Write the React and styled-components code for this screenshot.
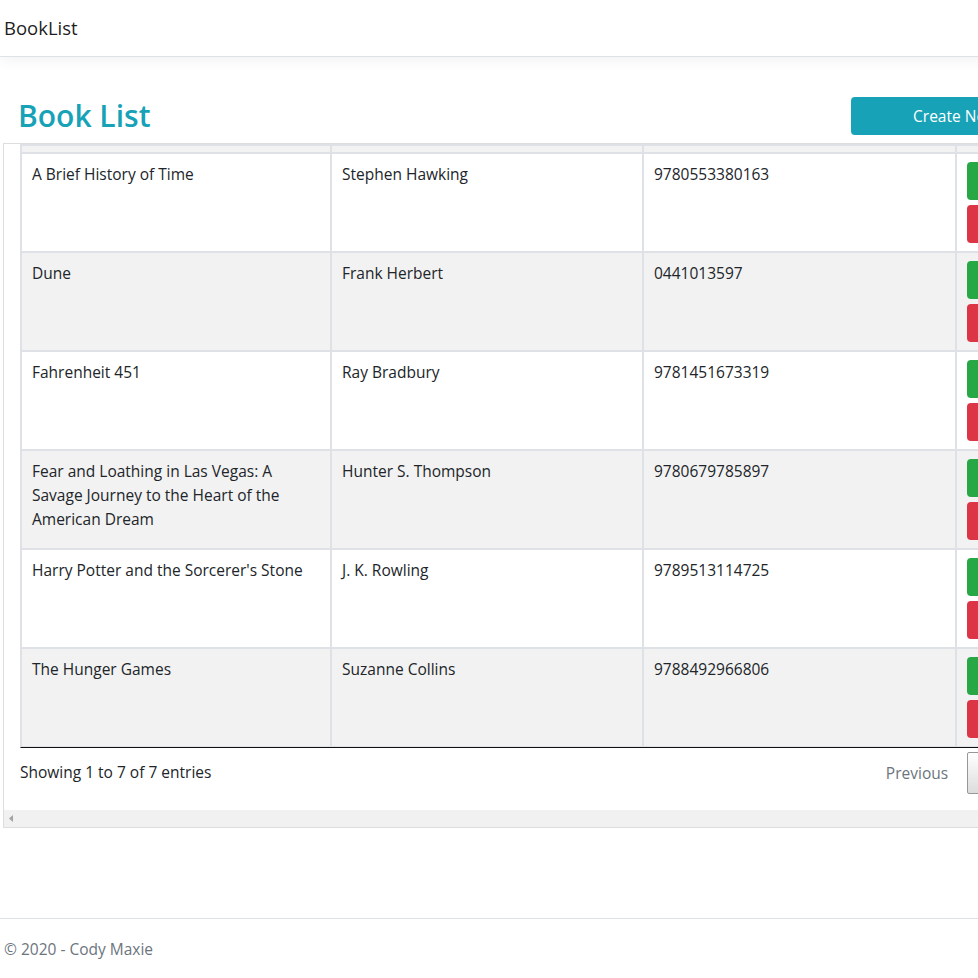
import React from 'react'
import styled, { createGlobalStyle } from 'styled-components'

const GlobalStyle = createGlobalStyle`
  * { box-sizing: border-box; }
  html, body {
    margin: 0;
    padding: 0;
    overflow: hidden;
    background: #fff;
  }
  body {
    font-family: "Open Sans", "Noto Sans", "DejaVu Sans", sans-serif;
    font-size: 15.5px;
    line-height: 24px;
    color: #212529;
  }
`

const Page = styled.div`
  display: flex;
  flex-direction: column;
  min-height: 978px;
  width: 1200px;
`

const Navbar = styled.nav`
  display: flex;
  align-items: center;
  height: 57px;
  padding: 8px 4px;
  border-bottom: 1px solid #dee2e6;
  box-shadow: 0 4px 12px rgba(0, 0, 0, 0.05);
  margin-bottom: 40px;
`

const Brand = styled.span`
  font-size: 18.5px;
  line-height: 30px;
  color: rgba(0, 0, 0, 0.9);
`

const Main = styled.main`
  flex: 1;
  margin-left: 3px;
`

const TitleRow = styled.div`
  display: flex;
  align-items: center;
  justify-content: space-between;
  width: 1113px;
  padding: 0 16px 0 15px;
  margin-bottom: 8px;
`

const Title = styled.h1`
  margin: 0;
  font-size: 30px;
  line-height: 38px;
  font-weight: 600;
  color: #17a2b8;
`

const CreateButton = styled.button`
  width: 249px;
  height: 38px;
  border: none;
  border-radius: 4px;
  background: #17a2b8;
  color: #fff;
  font: inherit;
  cursor: pointer;
`

const ScrollBox = styled.div`
  width: 1180px;
  border: 1px solid #ddd;
  border-right: none;
`

const ScrollInner = styled.div`
  padding-left: 16px;
`

const Table = styled.table`
  table-layout: fixed;
  width: 1060px;
  border-collapse: separate;
  border-spacing: 0;
  border: 1px solid #dee2e6;
  border-bottom: 1px solid #111;
`

const HeadCell = styled.th`
  height: 8px;
  padding: 0;
  background: #f2f2f2;
  border: 1px solid #dee2e6;
`

const Row = styled.tr`
  background: ${p => (p.$striped ? '#f2f2f2' : '#fff')};
`

const Cell = styled.td`
  padding: 8px 10px;
  vertical-align: top;
  border: 1px solid #dee2e6;
`

const Actions = styled.div`
  display: flex;
  flex-direction: column;
  gap: 5px;
`

const ActionButton = styled.button`
  height: 38px;
  width: 80px;
  border: none;
  border-radius: 4px;
  background: ${p => (p.$danger ? '#dc3545' : '#28a745')};
  color: #fff;
  font: inherit;
`

const InfoRow = styled.div`
  display: flex;
  align-items: flex-start;
  height: 62px;
  width: 1060px;
`

const Info = styled.div`
  padding-top: 12px;
  flex: 1;
`

const Paging = styled.div`
  display: flex;
  padding-top: 4px;
`

const PageButton = styled.span`
  display: inline-block;
  padding: 8px 16px;
  margin-left: 2px;
  border: 1px solid ${p => (p.$current ? '#979797' : 'transparent')};
  border-radius: 2px;
  color: ${p => (p.$current ? '#333' : '#6c757d')};
  background: ${p => (p.$current ? 'linear-gradient(to bottom, #fff 0%, #dcdcdc 100%)' : 'transparent')};
`

const ScrollTrack = styled.div`
  display: flex;
  align-items: center;
  height: 17px;
  background: #f1f1f1;
  padding-left: 5px;
`

const Footer = styled.footer`
  height: 60px;
  line-height: 60px;
  padding-left: 4px;
  border-top: 1px solid #dee2e6;
  color: #6c757d;
`

const books = [
  { title: 'A Brief History of Time', author: 'Stephen Hawking', isbn: '9780553380163' },
  { title: 'Dune', author: 'Frank Herbert', isbn: '0441013597' },
  { title: 'Fahrenheit 451', author: 'Ray Bradbury', isbn: '9781451673319' },
  { title: 'Fear and Loathing in Las Vegas: A Savage Journey to the Heart of the American Dream', author: 'Hunter S. Thompson', isbn: '9780679785897' },
  { title: "Harry Potter and the Sorcerer's Stone", author: 'J. K. Rowling', isbn: '9789513114725' },
  { title: 'The Hunger Games', author: 'Suzanne Collins', isbn: '9788492966806' },
]

const App = () => {
  return (
    <Page>
      <GlobalStyle />
      <Navbar>
        <Brand>BookList</Brand>
      </Navbar>
      <Main>
        <TitleRow>
          <Title>Book List</Title>
          <CreateButton>Create New Book</CreateButton>
        </TitleRow>
        <ScrollBox>
          <ScrollInner>
            <Table>
              <colgroup>
                <col style={{ width: 310 }} />
                <col style={{ width: 312 }} />
                <col style={{ width: 313 }} />
                <col />
              </colgroup>
              <thead>
                <tr>
                  <HeadCell />
                  <HeadCell />
                  <HeadCell />
                  <HeadCell />
                </tr>
              </thead>
              <tbody>
                {books.map((b, i) => (
                  <Row key={b.isbn} $striped={i % 2 === 1}>
                    <Cell>{b.title}</Cell>
                    <Cell>{b.author}</Cell>
                    <Cell>{b.isbn}</Cell>
                    <Cell>
                      <Actions>
                        <ActionButton>Edit</ActionButton>
                        <ActionButton $danger>Delete</ActionButton>
                      </Actions>
                    </Cell>
                  </Row>
                ))}
              </tbody>
            </Table>
            <InfoRow>
              <Info>Showing 1 to 7 of 7 entries</Info>
              <Paging>
                <PageButton>Previous</PageButton>
                <PageButton $current>1</PageButton>
                <PageButton>Next</PageButton>
              </Paging>
            </InfoRow>
          </ScrollInner>
          <ScrollTrack>
            <svg width="4" height="7" viewBox="0 0 4 7">
              <path d="M4 0 L0 3.5 L4 7 Z" fill="#a3a3a3" />
            </svg>
          </ScrollTrack>
        </ScrollBox>
      </Main>
      <Footer>© 2020 - Cody Maxie</Footer>
    </Page>
  )
}

export default App
